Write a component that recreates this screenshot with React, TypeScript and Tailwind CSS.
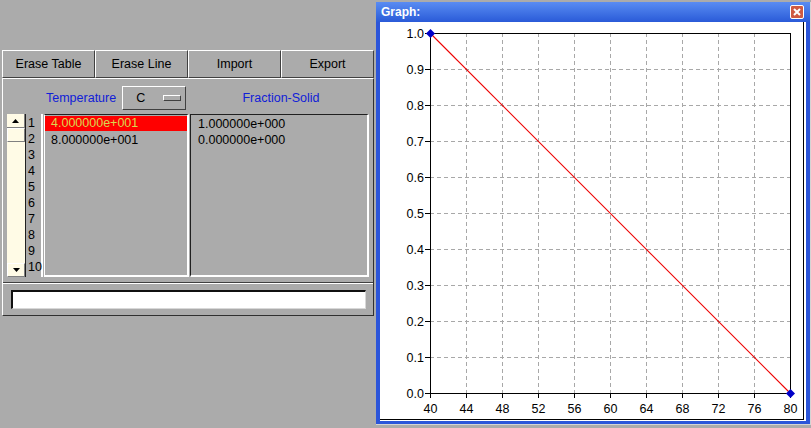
import React from 'react';

const font = { fontFamily: '"Liberation Sans", Arial, sans-serif' };

const temps = ['4.000000e+001', '8.000000e+001'];
const fracs = ['1.000000e+000', '0.000000e+000'];

function ToolButton({ label }: { label: string }) {
  return (
    <div className="h-[28px] flex items-center justify-center border-t border-l border-white border-r border-b border-r-[#404040] border-b-[#404040] text-black">
      {label}
    </div>
  );
}

function Arrow({ up }: { up?: boolean }) {
  return (
    <svg width="7" height="4" viewBox="0 0 7 4">
      <polygon points={up ? '0,4 7,4 3.5,0' : '0,0 7,0 3.5,4'} fill="#000" />
    </svg>
  );
}

function ScrollBar() {
  return (
    <div className="w-[18px] bg-[#fffbe6] flex flex-col">
      <div className="h-[14px] flex items-center justify-center border-b border-r border-[#808080] bg-[#fffbe6]">
        <Arrow up />
      </div>
      <div className="h-[14px] border-b border-r border-[#808080] border-t border-l border-t-white border-l-white" />
      <div className="flex-1" />
      <div className="h-[14px] flex items-center justify-center border-t border-l border-white border-b border-r border-b-[#808080] border-r-[#808080]">
        <Arrow />
      </div>
    </div>
  );
}

function Graph() {
  const x0 = 50;
  const y0 = 11;
  const step = 36;
  const xs = Array.from({ length: 11 }, (_, i) => x0 + step * i);
  const ys = Array.from({ length: 11 }, (_, i) => y0 + step * i);
  return (
    <svg width="423" height="397" viewBox="0 0 423 397" shapeRendering="crispEdges" style={font}>
      {xs.slice(1, 10).map((x) => (
        <line key={'v' + x} x1={x + 0.5} y1={y0} x2={x + 0.5} y2={371} stroke="#a8a8a8" strokeDasharray="4 3" />
      ))}
      {ys.slice(1, 10).map((y) => (
        <line key={'h' + y} x1={x0} y1={y + 0.5} x2={410} y2={y + 0.5} stroke="#a8a8a8" strokeDasharray="4 3" />
      ))}
      <rect x={50.5} y={11.5} width={360} height={360} fill="none" stroke="#000" />
      {ys.map((y) => (
        <line key={'ty' + y} x1={45} y1={y + 0.5} x2={50} y2={y + 0.5} stroke="#000" />
      ))}
      {xs.map((x) => (
        <line key={'tx' + x} x1={x + 0.5} y1={371} x2={x + 0.5} y2={376} stroke="#000" />
      ))}
      {ys.map((y, i) => (
        <text key={'ly' + y} x={44} y={y + 5} textAnchor="end" fontSize="12.5" fill="#000">
          {((10 - i) / 10).toFixed(1)}
        </text>
      ))}
      {xs.map((x, i) => (
        <text key={'lx' + x} x={x + 0.5} y={391} textAnchor="middle" fontSize="12.5" fill="#000">
          {40 + i * 4}
        </text>
      ))}
      <line x1={50.5} y1={11.5} x2={410.5} y2={371.5} stroke="#ee0000" strokeWidth="1.1" shapeRendering="auto" />
      <polygon points="50.5,7 55,11.5 50.5,16 46,11.5" fill="#0000c8" shapeRendering="auto" />
      <polygon points="410.5,367 415,371.5 410.5,376 406,371.5" fill="#0000c8" shapeRendering="auto" />
    </svg>
  );
}

export default function App() {
  return (
    <div className="w-[811px] h-[428px] bg-[#ababab] flex text-[12.5px] overflow-hidden" style={font}>
      <div className="w-[374px] pt-[50px] pl-[2px]">
        <div className="grid grid-cols-4 w-[372px]">
          <ToolButton label="Erase Table" />
          <ToolButton label="Erase Line" />
          <ToolButton label="Import" />
          <ToolButton label="Export" />
        </div>
        <div className="w-[372px] h-[238px] border-t border-l border-white border-b border-r border-b-[#303030] border-r-[#303030] flex flex-col pt-[7px] pb-[6px]">
          <div className="h-[24px] flex items-center pl-[4px]">
            <div className="w-[37px]" />
            <div className="w-[145px] flex items-center">
              <span className="ml-[2px] text-[#1020d8]">Temperature</span>
              <div className="ml-[6px] w-[64px] h-[24px] flex items-center border-t border-l border-white border-b border-r border-b-[#404040] border-r-[#404040]">
                <span className="ml-[13px]">C</span>
                <div className="ml-auto mr-[4px] w-[18px] h-[6px] border-t border-l border-white border-b border-r border-b-[#404040] border-r-[#404040]" />
              </div>
            </div>
            <div className="w-[180px] text-center text-[#1020d8] pl-[4px]">Fraction-Solid</div>
          </div>
          <div className="h-[163px] mt-[4px] flex pl-[4px]">
            <ScrollBar />
            <div className="w-[18px] border-l border-l-[#202020] border-r-2 border-r-white pl-[2px] pt-[1px] leading-[16px]">
              {Array.from({ length: 10 }, (_, i) => (
                <div key={i}>{i + 1}</div>
              ))}
            </div>
            <div className="ml-[1px] w-[145px] border-t border-l border-t-[#202020] border-l-white border-b-2 border-r-2 border-white pt-[1px] leading-[16px]">
              {temps.map((t, i) => (
                <div key={t} className={i === 0 ? 'bg-[#ff0000] text-[#d8d850] pl-[6px] h-[15px] leading-[15px] mb-[1px]' : 'pl-[6px]'}>
                  {t}
                </div>
              ))}
            </div>
            <div className="ml-[1px] w-[179px] border-t border-l border-[#202020] border-b-2 border-r-2 border-b-white border-r-white pt-[1px] leading-[16px]">
              {fracs.map((f) => (
                <div key={f} className="pl-[7px]">
                  {f}
                </div>
              ))}
            </div>
          </div>
          <div className="mt-[5px] mx-[0px] border-t border-t-[#404040] border-b border-b-white" />
          <div className="mt-[6px] ml-[8px] w-[355px] h-[19px] bg-white border-t-2 border-l-2 border-t-[#101010] border-l-[#101010] border-b border-r border-[#d8d8d8]" />
        </div>
      </div>
      <div className="ml-[2px] mt-[2px] w-[435px] h-[423px] border-r border-b border-[#d4d4d4] flex flex-col bg-[#2b55d9]">
        <div className="h-[20px] flex items-center bg-gradient-to-b from-[#5a8cf2] to-[#2a5ad8] pl-[5px] pr-[6px]">
          <span className="text-white font-bold text-[12px]">Graph:</span>
          <div className="ml-auto w-[14px] h-[14px] rounded-[2px] border border-white bg-[#cf5a42] flex items-center justify-center">
            <svg width="8" height="8" viewBox="0 0 8 8">
              <path d="M1 1L7 7M7 1L1 7" stroke="#fff" strokeWidth="2" />
            </svg>
          </div>
        </div>
        <div className="mx-[4px] h-[399px] bg-white">
          <div className="w-[424px] h-[398px] border-r border-b border-black">
            <Graph />
          </div>
        </div>
      </div>
    </div>
  );
}
